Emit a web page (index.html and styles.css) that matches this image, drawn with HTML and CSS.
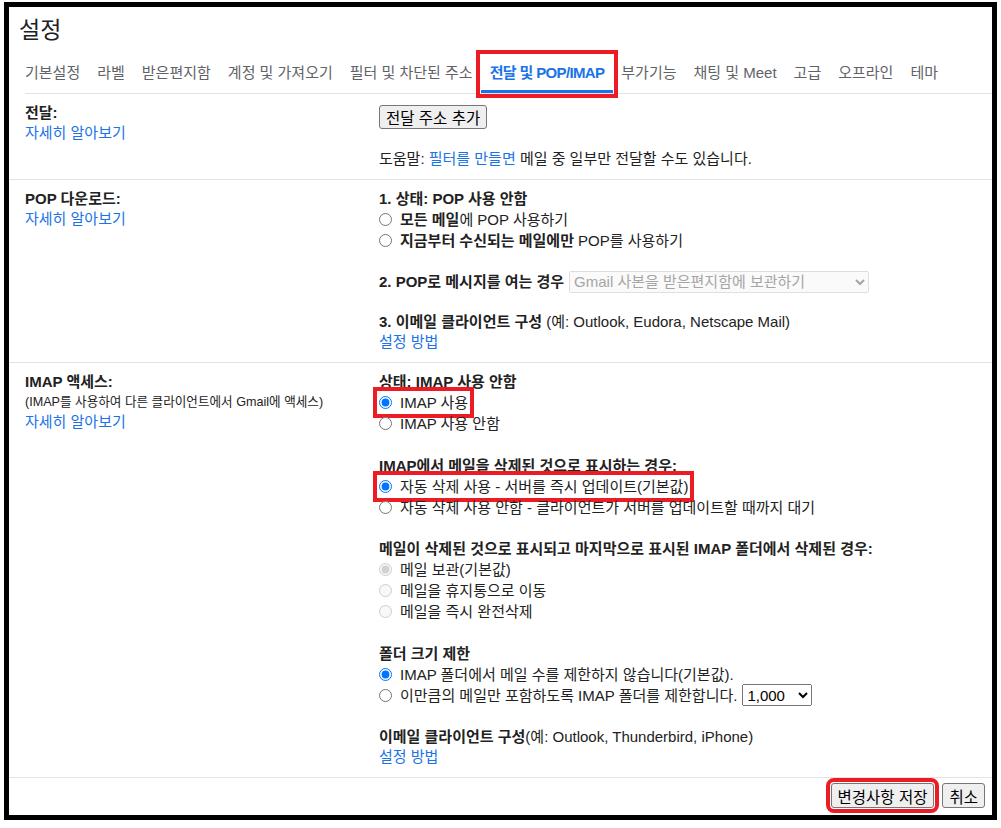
FILE: index.html
```html
<!DOCTYPE html>
<html lang="ko">
<head>
    <meta charset="UTF-8">
    <meta name="viewport" content="width=device-width, initial-scale=1.0">
    <title>설정 - 전달 및 POP/IMAP</title>
    <link rel="stylesheet" href="styles.css">
</head>
<body>
    <div class="frame">
        <h1 class="page-title">설정</h1>

        <nav class="tabs">
            <a class="tab" href="#">기본설정</a>
            <a class="tab" href="#">라벨</a>
            <a class="tab" href="#">받은편지함</a>
            <a class="tab" href="#">계정 및 가져오기</a>
            <a class="tab" href="#">필터 및 차단된 주소</a>
            <a class="tab active" href="#">전달 및 POP/IMAP</a>
            <a class="tab" href="#">부가기능</a>
            <a class="tab" href="#">채팅 및 Meet</a>
            <a class="tab" href="#">고급</a>
            <a class="tab" href="#">오프라인</a>
            <a class="tab" href="#">테마</a>
        </nav>

        <!-- 전달 -->
        <div class="section">
            <div class="section-label">
                <b>전달:</b>
                <a class="link" href="#">자세히 알아보기</a>
            </div>
            <div class="section-body">
                <button class="btn btn-forward" type="button">전달 주소 추가</button>
                <p class="help">도움말: <a class="link" href="#">필터를 만들면</a> 메일 중 일부만 전달할 수도 있습니다.</p>
            </div>
        </div>

        <!-- POP -->
        <div class="section">
            <div class="section-label">
                <b>POP 다운로드:</b>
                <a class="link" href="#">자세히 알아보기</a>
            </div>
            <div class="section-body">
                <div class="group">
                    <b class="line">1. 상태: POP 사용 안함</b>
                    <div class="opt">
                        <input type="radio" name="pop" id="pop_all">
                        <label for="pop_all"><b>모든 메일</b>에 POP 사용하기</label>
                    </div>
                    <div class="opt">
                        <input type="radio" name="pop" id="pop_new">
                        <label for="pop_new"><b>지금부터 수신되는 메일에만</b> POP를 사용하기</label>
                    </div>
                </div>
                <div class="group pop-gap opt-line">
                    <b>2. POP로 메시지를 여는 경우</b>
                    <select class="pop-action" disabled>
                        <option>Gmail 사본을 받은편지함에 보관하기</option>
                    </select>
                </div>
                <div class="group pop-gap">
                    <span class="line"><b>3. 이메일 클라이언트 구성</b> (예: Outlook, Eudora, Netscape Mail)</span>
                    <a class="link line" href="#">설정 방법</a>
                </div>
            </div>
        </div>

        <!-- IMAP -->
        <div class="section">
            <div class="section-label">
                <b>IMAP 액세스:</b>
                <span class="note">(IMAP를 사용하여 다른 클라이언트에서 Gmail에 액세스)</span>
                <a class="link" href="#">자세히 알아보기</a>
            </div>
            <div class="section-body">
                <div class="group">
                    <b class="line">상태: IMAP 사용 안함</b>
                    <div class="opt">
                        <span class="mark">
                            <input type="radio" name="imap" id="imap_on" checked>
                            <label for="imap_on">IMAP 사용</label>
                        </span>
                    </div>
                    <div class="opt">
                        <input type="radio" name="imap" id="imap_off">
                        <label for="imap_off">IMAP 사용 안함</label>
                    </div>
                </div>

                <div class="group">
                    <b class="line">IMAP에서 메일을 삭제된 것으로 표시하는 경우:</b>
                    <div class="opt">
                        <span class="mark">
                            <input type="radio" name="expunge" id="exp_on" checked>
                            <label for="exp_on">자동 삭제 사용 - 서버를 즉시 업데이트(기본값)</label>
                        </span>
                    </div>
                    <div class="opt">
                        <input type="radio" name="expunge" id="exp_off">
                        <label for="exp_off">자동 삭제 사용 안함 - 클라이언트가 서버를 업데이트할 때까지 대기</label>
                    </div>
                </div>

                <div class="group">
                    <b class="line">메일이 삭제된 것으로 표시되고 마지막으로 표시된 IMAP 폴더에서 삭제된 경우:</b>
                    <div class="opt">
                        <input type="radio" name="deleted" id="del_keep" checked disabled>
                        <label for="del_keep">메일 보관(기본값)</label>
                    </div>
                    <div class="opt">
                        <input type="radio" name="deleted" id="del_trash" disabled>
                        <label for="del_trash">메일을 휴지통으로 이동</label>
                    </div>
                    <div class="opt">
                        <input type="radio" name="deleted" id="del_now" disabled>
                        <label for="del_now">메일을 즉시 완전삭제</label>
                    </div>
                </div>

                <div class="group">
                    <b class="line">폴더 크기 제한</b>
                    <div class="opt">
                        <input type="radio" name="limit" id="limit_none" checked>
                        <label for="limit_none">IMAP 폴더에서 메일 수를 제한하지 않습니다(기본값).</label>
                    </div>
                    <div class="opt">
                        <input type="radio" name="limit" id="limit_some">
                        <label for="limit_some">이만큼의 메일만 포함하도록 IMAP 폴더를 제한합니다.</label>
                        <select class="limit-count">
                            <option>1,000</option>
                            <option>2,000</option>
                            <option>5,000</option>
                            <option>10,000</option>
                        </select>
                    </div>
                </div>

                <div class="group">
                    <span class="line"><b>이메일 클라이언트 구성</b>(예: Outlook, Thunderbird, iPhone)</span>
                    <a class="link line" href="#">설정 방법</a>
                </div>
            </div>
        </div>

        <div class="actions">
            <button class="btn btn-save" type="button">변경사항 저장</button>
            <button class="btn" type="button">취소</button>
        </div>
    </div>
</body>
</html>
```

FILE: styles.css
```css
body {
    margin: 0;
    font-family: "Liberation Sans", "Noto Sans CJK KR", sans-serif;
    font-size: 15px;
    color: #222;
    background-color: #fff;
}
.frame {
    box-sizing: border-box;
    height: 818px;
    margin: 2px 4px 0 4px;
    border: 5px solid #000;
    overflow: hidden;
}
.page-title {
    margin: 0;
    padding: 9px 0 0 10px;
    font-size: 23px;
    font-weight: normal;
    line-height: 28px;
    color: #202124;
}

/* tabs */
.tabs {
    display: flex;
    margin: 11px 0 0 16px;
    border-bottom: 1px solid #e3e3e3;
}
.tab {
    padding: 8px 8.5px 7px;
    line-height: 20px;
    color: #5f6368;
    text-decoration: none;
    border-bottom: 3px solid transparent;
    white-space: nowrap;
}
.tab:first-child {
    padding-left: 0;
}
.tab.active {
    color: #1a73e8;
    font-weight: bold;
    letter-spacing: -0.65px;
    border-bottom-color: #1a73e8;
    outline: 4px solid #ed1c24;
    outline-offset: 1px;
}

/* sections */
.section {
    display: grid;
    grid-template-columns: 354px 1fr;
    padding: 9px 0 10px 16px;
    border-bottom: 1px solid #e3e3e3;
    line-height: 20px;
}
.section-label b,
.section-label .note,
.section-label .link {
    display: block;
}
.note {
    font-size: 12.6px;
}
.link {
    color: #1a73e8;
    text-decoration: none;
}
.line {
    display: block;
}
.group + .group {
    margin-top: 21.5px;
}
.group.pop-gap {
    margin-top: 20px;
}
.help {
    margin: 20px 0 0;
}

/* radio rows */
.opt {
    display: flex;
    align-items: center;
    gap: 8px;
    height: 21px;
    line-height: 21px;
    white-space: nowrap;
}
.opt input[type="radio"] {
    width: 13px;
    height: 13px;
    margin: 0;
}
.opt-line {
    display: flex;
    align-items: center;
    gap: 5px;
    height: 21px;
}
.mark {
    display: inline-flex;
    align-items: center;
    gap: 8px;
    margin-left: -1px;
    padding: 0 1px;
    outline: 4px solid #ed1c24;
    outline-offset: 1px;
}

/* selects */
select {
    font-family: inherit;
    font-size: 15px;
}
.pop-action {
    width: 300px;
    height: 22px;
}
.limit-count {
    width: 70px;
    height: 22px;
    margin-left: -3px;
}

/* buttons */
.btn {
    font-family: inherit;
    font-size: 15.5px;
    height: 25px;
    padding: 0 6px;
    color: #000;
    background-color: #efefef;
    border: 1px solid #767676;
    border-radius: 3px;
}
.btn-forward {
    display: block;
    height: 24px;
    margin-top: 2px;
}
.btn-save {
    outline: 4px solid #ed1c24;
    outline-offset: 1px;
}
.actions {
    display: flex;
    justify-content: flex-end;
    gap: 8px;
    padding: 5px 7px 0 0;
}
```
